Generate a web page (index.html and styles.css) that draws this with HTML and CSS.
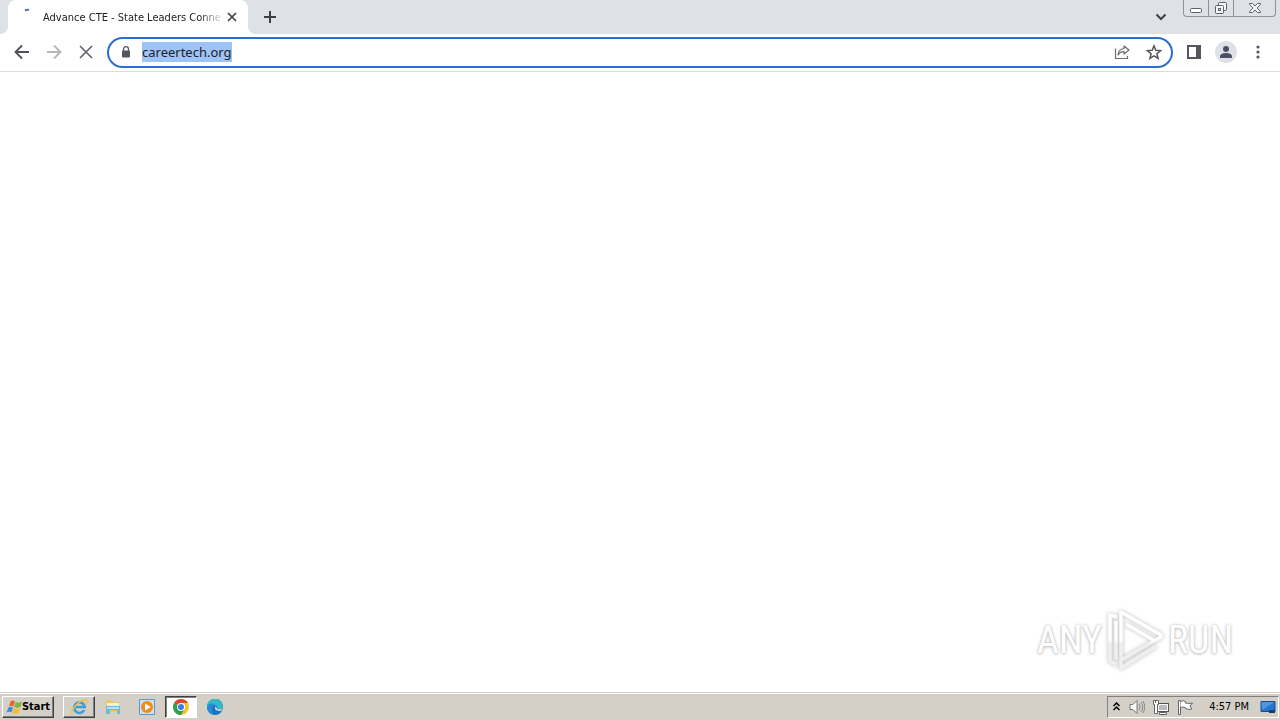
FILE: index.html
```html
<!DOCTYPE html>
<html lang="en">
<head>
    <meta charset="UTF-8">
    <meta name="viewport" content="width=device-width, initial-scale=1.0">
    <title>Advance CTE - State Leaders Connecting Learning to Work</title>
    <link rel="stylesheet" href="styles.css">
</head>
<body>
    <header class="tab-strip">
        <div class="tab">
            <svg class="tab-spinner" width="16" height="16" viewBox="0 0 16 16"><path d="M6 2.500q2-1 4-.5" fill="none" stroke="#4a78c0" stroke-width="2"/></svg>
            <span class="tab-title">Advance CTE - State Leaders Conne</span>
            <button class="tab-close" aria-label="Close tab">
                <svg width="10" height="10" viewBox="0 0 10 10"><path d="M1 1l8 8M9 1l-8 8" stroke="#3c4043" stroke-width="1.7"/></svg>
            </button>
        </div>
        <button class="new-tab" aria-label="New tab">
            <svg width="12" height="12" viewBox="0 0 12 12"><path d="M6 0v12M0 6h12" stroke="#3c4043" stroke-width="2"/></svg>
        </button>
        <button class="tab-search" aria-label="Search tabs">
            <svg width="12" height="8" viewBox="0 0 12 8"><path d="M1.500 1.500L6 6l4.500-4.500" fill="none" stroke="#3c4043" stroke-width="2"/></svg>
        </button>
        <div class="window-controls">
            <button aria-label="Minimize">
                <svg width="14" height="16" viewBox="0 0 14 16"><rect x="1.500" y="8.500" width="11" height="4" rx="1" fill="#fff" stroke="#5b616b"/></svg>
            </button>
            <button aria-label="Restore">
                <svg width="14" height="16" viewBox="0 0 14 16"><g fill="#f4f5f8" stroke="#5b616b"><rect x="4.500" y="2.500" width="8" height="8" rx="1"/><rect x="1.500" y="5.500" width="8" height="8" rx="1"/><rect x="4.500" y="8.500" width="2" height="2"/></g></svg>
            </button>
            <button class="window-close" aria-label="Close">
                <svg width="14" height="16" viewBox="0 0 14 16"><path d="M1.500 3.500h3L7 6l2.500-2.500h3v1L9 8l3.500 3.500v1h-3L7 10l-2.500 2.500h-3v-1L5 8 1.500 4.500z" fill="#f4f5f8" stroke="#5b616b"/></svg>
            </button>
        </div>
    </header>

    <nav class="toolbar">
        <button class="tool" aria-label="Back">
            <svg width="16" height="16" viewBox="0 0 16 16"><path d="M15 8H2M8 1.500L1.500 8 8 14.500" fill="none" stroke="#505357" stroke-width="1.900"/></svg>
        </button>
        <button class="tool" aria-label="Forward">
            <svg width="16" height="16" viewBox="0 0 16 16"><path d="M1 8h13M8 1.500L14.500 8 8 14.500" fill="none" stroke="#b4b6b9" stroke-width="1.900"/></svg>
        </button>
        <button class="tool" aria-label="Stop">
            <svg width="14" height="14" viewBox="0 0 14 14"><path d="M1 1l12 12M13 1L1 13" stroke="#5f6368" stroke-width="1.600"/></svg>
        </button>
        <div class="omnibox">
            <svg class="lock" width="10" height="12" viewBox="0 0 10 12"><path d="M2.500 5V3.200a2.500 2.500 0 0 1 5 0V5" fill="none" stroke="#54575b" stroke-width="1.300"/><rect x="1" y="4.500" width="8" height="7" rx="1" fill="#54575b"/></svg>
            <input class="url" id="url" type="text" value="careertech.org" aria-label="Address" spellcheck="false">
            <button class="tool" aria-label="Share">
                <svg width="16" height="16" viewBox="0 0 16 16"><path d="M1.500 4.500v10h12v-2.500" fill="none" stroke="#6b6f74" stroke-width="1.200"/><path d="M10 2l5 4-5 4V7.700C7.500 7.500 5.500 8.500 4 11c.2-3.500 2.500-6 6-6.500z" fill="none" stroke="#6b6f74" stroke-width="1.200" stroke-linejoin="round"/></svg>
            </button>
            <button class="tool" aria-label="Bookmark this tab">
                <svg width="16" height="16" viewBox="0 0 16 16"><path d="M8 1.800l1.800 4.400 4.800.4-3.700 3.100 1.200 4.600L8 11.800l-4.100 2.500 1.200-4.600L1.400 6.600l4.800-.4z" fill="none" stroke="#54575b" stroke-width="1.500"/></svg>
            </button>
        </div>
        <button class="tool" aria-label="Side panel">
            <svg width="14" height="14" viewBox="0 0 14 14"><rect x="1" y="1" width="12" height="12" fill="none" stroke="#54575b" stroke-width="2"/><path d="M9 1h4v12H9z" fill="#54575b"/></svg>
        </button>
        <button class="tool" aria-label="Profile">
            <svg width="22" height="22" viewBox="0 0 22 22"><circle cx="11" cy="11" r="11" fill="#dee1e6"/><circle cx="11" cy="8" r="3" fill="#4a5063"/><path d="M5 17v-1.500q0-3.500 6-3.500t6 3.500V17z" fill="#4a5063"/></svg>
        </button>
        <button class="tool" aria-label="Menu">
            <svg width="4" height="14" viewBox="0 0 4 14"><g fill="#54575b"><circle cx="2" cy="2" r="1.600"/><circle cx="2" cy="7" r="1.600"/><circle cx="2" cy="12" r="1.600"/></g></svg>
        </button>
    </nav>

    <main class="page">
        <div class="watermark">
            <span>ANY</span>
            <svg class="watermark-logo" width="58" height="64" viewBox="0 0 58 64">
                <defs>
                    <linearGradient id="fade" gradientUnits="userSpaceOnUse" x1="0" y1="0" x2="0" y2="64">
                        <stop offset=".5" stop-color="#fff"/>
                        <stop offset=".56" stop-color="#efefef"/>
                    </linearGradient>
                </defs>
                <g fill="none" stroke="url(#fade)" stroke-width="3.500" stroke-linejoin="round">
                    <path d="M50 38L15 60v-8L55 29v-2L15 4v48"/>
                    <path d="M20 16l29 17"/>
                    <path d="M11 9L4 7v46l7 4"/>
                    <path d="M10 13v38"/>
                </g>
            </svg>
            <span>RUN</span>
        </div>
    </main>

    <footer class="taskbar">
        <button class="start">
            <svg width="16" height="16" viewBox="0 0 16 16"><path d="M4.500 2.500q2-2 4.500 0L7.500 7.500Q5.500 6 3 7.500z" fill="#e8652a"/><path d="M9.700 3q3 1.500 6.300-.5L14.500 8q-3 1.500-6.300 0z" fill="#79b83e"/><path d="M2.500 8.500q2.500-1.500 4.500 0L5.500 13.500Q3.500 12 .5 13.500z" fill="#3f8dd8"/><path d="M7.900 9q3 1.500 6.300.2L12.500 14q-3 1.500-6-.3z" fill="#f5bc2c"/></svg>
            Start
        </button>
        <div class="apps">
            <button class="app raised" aria-label="Internet Explorer">
                <svg width="18" height="18" viewBox="0 0 18 18"><path d="M14.200 12a5.300 5.300 0 1 1 .5-3H5" fill="none" stroke="#3a9fdc" stroke-width="2.600"/><path d="M2.500 16C-1 13 10 1 16 2c2 .5 1 3-.5 5" fill="none" stroke="#ecc04a" stroke-width="1.500"/></svg>
            </button>
            <button class="app" aria-label="File Explorer">
                <svg width="18" height="18" viewBox="0 0 18 18"><path d="M2 3l5-1 1 2h7v10H2z" fill="#e9c95f"/><path d="M3 5h12v4H3z" fill="#fff4b5"/><path d="M2 8h14v8h-3v-4H6v4H2z" fill="#6fb8de"/><path d="M3 9h12v2H3z" fill="#b8e2f5"/></svg>
            </button>
            <button class="app" aria-label="Media Player">
                <svg width="18" height="18" viewBox="0 0 18 18"><path d="M1.500 1.500h15v15h-15z" fill="#c9e3f5" stroke="#559bd0"/><circle cx="9" cy="9" r="6" fill="#f08a1d"/><path d="M7 5.500v7L13 9z" fill="#fff"/></svg>
            </button>
            <button class="app pressed" aria-label="Chrome">
                <svg width="16" height="16" viewBox="0 0 16 16"><circle cx="8" cy="8" r="8" fill="#f6c42c"/><path d="M8 8L1.100 4A8 8 0 0 1 14.900 4H8z" fill="#e04536"/><path d="M8 8L1.100 4A8 8 0 0 0 8 16l3.500-6z" fill="#2f9e50"/><circle cx="8" cy="8" r="4" fill="#fff"/><circle cx="8" cy="8" r="3" fill="#3b7de0"/></svg>
            </button>
            <button class="app" aria-label="Edge">
                <svg width="16" height="16" viewBox="0 0 16 16"><circle cx="8" cy="8" r="8" fill="#1673c8"/><path d="M0 8a8 8 0 0 1 16-1c0 3-3 4-6 3 1-2 0-4-3-4S1 8 0 8z" fill="#35b8c8"/><path d="M0 8c1-4 7-5 9-1-4-2-6 5-1 8.500C3 16 0 12 0 8z" fill="#2389d8"/><path d="M8.500 7.500C7 9 8 12.500 14 12l2-3-1.500 1c-2 .7-5 0-4.500-1z" fill="#d4d0c8"/></svg>
            </button>
        </div>
        <div class="tray">
            <button class="tray-icon tray-more" aria-label="Show hidden icons">
                <svg width="7" height="9" viewBox="0 0 7 9"><path d="M.5 4l3-3 3 3M.5 8l3-3 3 3" fill="none" stroke="#000" stroke-width="1.500"/></svg>
            </button>
            <button class="tray-icon" aria-label="Volume">
                <svg width="16" height="16" viewBox="0 0 16 16"><path d="M1 5.500h3l4-4v13l-4-4H1z" fill="#fff" stroke="#777"/><path d="M10 5q2 3 0 6M12 3q3.500 5 0 10M14 2q3.500 6 0 12" fill="none" stroke="#888"/></svg>
            </button>
            <button class="tray-icon" aria-label="Network">
                <svg width="16" height="16" viewBox="0 0 16 16"><rect x="4.500" y="4.500" width="11" height="8" fill="#bbb" stroke="#555"/><path d="M5.500 5.500h9v6h-9z" fill="none" stroke="#fff"/><path d="M6.500 13.500h7v2h-7z" fill="#fff" stroke="#666"/><path d="M.5 1.500h5v4h-1v9h-3v-9h-1z" fill="#fff" stroke="#666"/><path d="M2.500 1v3" stroke="#666"/></svg>
            </button>
            <button class="tray-icon" aria-label="Action Center">
                <svg width="16" height="16" viewBox="0 0 16 16"><path d="M1.500 1.500h2v14h-2z" fill="#fff" stroke="#666"/><path d="M3.500 2.500q3-1.500 5 0v1.500q3 1 7 0l-2.500 3 2 3q-3 1-6.500-.5V8.500q-3-1-5 0" fill="#fff" stroke="#666"/></svg>
            </button>
            <time class="clock">4:57 PM</time>
            <button class="desktop" aria-label="Show desktop">
                <svg width="16" height="14" viewBox="0 0 16 14"><path d="M1 1.500h14v10H1z" fill="#2476d0" stroke="#174b92"/><path d="M1.500 2h13L2 10z" fill="#4b98e0"/><path d="M9 10h6v3H9z" fill="#1c3970"/></svg>
            </button>
        </div>
    </footer>

    <script>
        // the address is selected while the page loads
        const url = document.getElementById('url');
        url.focus();
        url.select();
    </script>
</body>
</html>
```
FILE: styles.css
```css
* {
    box-sizing: border-box;
}
body {
    display: flex;
    flex-direction: column;
    min-height: 100vh;
    margin: 0;
    background-color: #fff;
    font-family: "DejaVu Sans Condensed", "DejaVu Sans", sans-serif;
    font-size: 11px;
    color: #202124;
}
button {
    display: flex;
    align-items: center;
    justify-content: center;
    padding: 0;
    border: none;
    background: none;
    font: inherit;
    color: inherit;
}
svg {
    flex: none;
}

/* tabs */
.tab-strip {
    display: flex;
    height: 34px;
    padding: 0 4px 0 8px;
    background-color: #dee1e6;
}
.tab {
    position: relative;
    display: flex;
    align-items: center;
    width: 240px;
    padding: 0 8px 0 11px;
    border-radius: 8px 8px 0 0;
    background-color: #fff;
}
.tab::before,
.tab::after {
    content: "";
    position: absolute;
    bottom: 0;
    width: 8px;
    height: 8px;
}
.tab::before {
    right: 100%;
    background: radial-gradient(circle at 0 0, #dee1e6 8px, #fff 8px);
}
.tab::after {
    left: 100%;
    background: radial-gradient(circle at 100% 0, #dee1e6 8px, #fff 8px);
}
.tab-spinner {
    align-self: flex-start;
    margin-top: 8px;
}
.tab-title {
    flex: 1;
    margin-left: 8px;
    white-space: nowrap;
    mask-image: linear-gradient(to left, transparent, #000 24px);
}
.tab-close {
    width: 16px;
    height: 16px;
}
.new-tab {
    width: 28px;
    margin-left: 8px;
}
.tab-search {
    width: 28px;
    margin-left: auto;
}
.window-controls {
    display: flex;
    height: 17px;
    margin-left: 8px;
    border: 1px solid #8d929b;
    border-top: none;
    border-radius: 0 0 4px 4px;
}
.window-controls button {
    width: 25px;
    border-right: 1px solid #8d929b;
}
.window-controls .window-close {
    width: 41px;
    border-right: none;
}

/* toolbar */
.toolbar {
    display: flex;
    align-items: center;
    height: 38px;
    padding: 0 6px 1px;
    border-bottom: 1px solid #dcdde0;
}
.tool {
    width: 32px;
    height: 28px;
}
.omnibox {
    display: flex;
    flex: 1;
    align-items: center;
    height: 31px;
    margin: 0 5px;
    padding: 0 1px 0 12px;
    border: 2px solid #2a6fd0;
    border-radius: 16px;
}
.url {
    flex: 1;
    min-width: 0;
    height: 20px;
    margin-left: 11px;
    padding: 0;
    border: none;
    outline: none;
    background: none;
    font-family: "Noto Sans", sans-serif;
    font-size: 13px;
    line-height: 20px;
    color: #202124;
}
.url::selection {
    background-color: #9dc3f7;
    color: #202124;
}

/* page */
.page {
    display: flex;
    flex: 1;
    align-items: flex-end;
    justify-content: flex-end;
    padding: 0 47px 20px;
}
.watermark {
    display: flex;
    align-items: center;
    gap: 4px;
    font-family: "Liberation Sans Narrow", "Roboto Condensed", Roboto, sans-serif;
    font-size: 38px;
    line-height: 64px;
    color: #fff;
    text-shadow: 0 0 3px #bbb, 0 1px 3px #ccc;
}
.watermark-logo {
    filter: drop-shadow(0 0 2px #bbb);
}

/* taskbar */
.taskbar {
    display: flex;
    align-items: center;
    height: 28px;
    padding: 0 0 0 2px;
    border-top: 1px solid #d4d0c8;
    box-shadow: inset 0 1px #fff;
    background-color: #d4d0c8;
    color: #000;
}
.start,
.raised {
    border: 1px solid;
    border-color: #fff #404040 #404040 #fff;
    box-shadow: inset -1px -1px #808080;
}
.start {
    width: 52px;
    height: 22px;
    font-weight: bold;
}
.apps {
    display: flex;
    gap: 2px;
    margin-left: 9px;
}
.app {
    width: 32px;
    height: 22px;
}
.pressed {
    border: 1px solid;
    border-color: #404040 #fff #fff #404040;
    box-shadow: inset 1px 1px #808080;
    background-color: #fff;
}
.tray {
    display: flex;
    align-items: center;
    height: 22px;
    margin-left: auto;
    margin-right: 1px;
    padding: 0 2px 0 2px;
    border: 1px solid;
    border-color: #808080 #fff #fff #808080;
}
.tray-icon {
    width: 24px;
    height: 20px;
}
.tray-more {
    width: 12px;
    margin-right: 3px;
}
.clock {
    margin: 0 11px 0 12px;
}
.desktop {
    width: 16px;
    height: 20px;
}
```
